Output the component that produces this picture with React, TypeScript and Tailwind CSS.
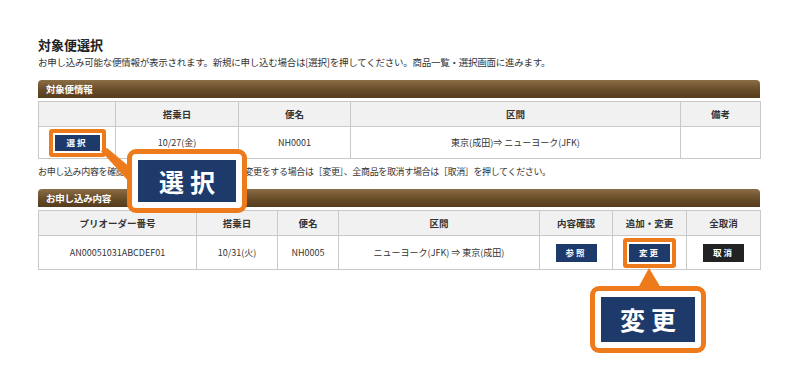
import React from "react";

const jp = { fontFamily: '"Noto Sans CJK JP", "Noto Sans", sans-serif' };

const SectionBar = ({ label }: { label: string }) => (
  <div className="h-[18px] rounded-t-[4px] bg-gradient-to-b from-[#8c6e46] via-[#6b4f2b] to-[#553c1d] pl-[8px] flex items-center">
    <span className="text-[9.5px] font-bold text-white tracking-[-0.2px]">{label}</span>
  </div>
);

const Th = ({ children, w }: { children?: React.ReactNode; w: string }) => (
  <th className={`${w} h-[25px] border border-[#c9c9c9] bg-[#f1f1f1] text-[9.5px] font-bold text-[#333] text-center align-middle`}>
    {children}
  </th>
);

const Td = ({ children, h = "h-[32px]" }: { children?: React.ReactNode; h?: string }) => (
  <td className={`${h} border border-[#c9c9c9] bg-white text-[9px] text-[#333] text-center align-middle`}>{children}</td>
);

const SmallBtn = ({ label, dark }: { label: string; dark?: boolean }) => (
  <span
    className={`inline-flex items-center justify-center w-[41px] h-[18px] text-[8.5px] font-bold text-white tracking-[2px] ${
      dark ? "bg-[#222222]" : "bg-[#1d3a6b]"
    }`}
  >
    {label}
  </span>
);

const Highlight = ({ children }: { children: React.ReactNode }) => (
  <span className="inline-flex p-[2px] border-[4px] border-[#ee7b1b] rounded-[3px] bg-white">{children}</span>
);

export default function App() {
  return (
    <div className="relative w-[800px] h-[392px] bg-white overflow-hidden" style={jp}>
      <div className="pt-[36px] pl-[38px] w-[760px]">
        <h1 className="text-[13px] font-bold text-[#222] leading-[18px]">対象便選択</h1>
        <p className="text-[9.5px] text-[#333] leading-[14px] mt-[1px] tracking-[-0.25px]">
          お申し込み可能な便情報が表示されます。新規に申し込む場合は[選択]を押してください。商品一覧・選択画面に進みます。
        </p>

        <div className="mt-[11px]">
          <SectionBar label="対象便情報" />
          <table className="mt-[3px] w-[722px] border-collapse table-fixed">
            <thead>
              <tr>
                <Th w="w-[77px]" />
                <Th w="w-[123px]">搭乗日</Th>
                <Th w="w-[112px]">便名</Th>
                <Th w="w-[330px]">区間</Th>
                <Th w="w-[80px]">備考</Th>
              </tr>
            </thead>
            <tbody>
              <tr>
                <Td>
                  <Highlight>
                    <span className="inline-flex items-center justify-center w-[45px] h-[16px] bg-[#1d3a6b] text-[8.5px] font-bold text-white tracking-[2px]">
                      選択
                    </span>
                  </Highlight>
                </Td>
                <Td>10/27(金)</Td>
                <Td>NH0001</Td>
                <Td>東京(成田)⇒ ニューヨーク(JFK)</Td>
                <Td />
              </tr>
            </tbody>
          </table>
        </div>

        <p className="mt-[6px] text-[9px] text-[#333] leading-[14px] tracking-[-0.35px]">
          お申し込み内容を確<span className="tracking-[0.5px]">認する場合は［参照］、追加・</span>
          変更をする場合は［変更］、全商品を取消す場合は［取消］を押してください。
        </p>

        <div className="mt-[10px]">
          <SectionBar label="お申し込み内容" />
          <table className="mt-[3px] w-[722px] border-collapse table-fixed">
            <thead>
              <tr>
                <Th w="w-[158px]">プリオーダー番号</Th>
                <Th w="w-[81px]">搭乗日</Th>
                <Th w="w-[61px]">便名</Th>
                <Th w="w-[201px]">区間</Th>
                <Th w="w-[73px]">内容確認</Th>
                <Th w="w-[74px]">追加・変更</Th>
                <Th w="w-[74px]">全取消</Th>
              </tr>
            </thead>
            <tbody>
              <tr>
                <Td h="h-[34px]">AN00051031ABCDEF01</Td>
                <Td h="h-[34px]">10/31(火)</Td>
                <Td h="h-[34px]">NH0005</Td>
                <Td h="h-[34px]">ニューヨーク(JFK) ⇒ 東京(成田)</Td>
                <Td h="h-[34px]">
                  <SmallBtn label="参照" />
                </Td>
                <Td h="h-[34px]">
                  <Highlight>
                    <SmallBtn label="変更" />
                  </Highlight>
                </Td>
                <Td h="h-[34px]">
                  <SmallBtn label="取消" dark />
                </Td>
              </tr>
            </tbody>
          </table>
        </div>
      </div>

      {/* callout tails */}
      <svg className="absolute left-0 top-0 pointer-events-none" width="800" height="392">
        <polygon points="101,151 107,148 131,168 131,184" fill="#ee7b1b" />
        <polygon points="649,268 638,288 661,288" fill="#ee7b1b" />
      </svg>

      {/* callout 1 */}
      <div className="absolute left-[127px] top-[149px] w-[120px] h-[64px] rounded-[9px] border-[5px] border-[#ee7b1b] bg-white p-[6px]">
        <div className="w-full h-full bg-[#1d3a6b] flex items-center justify-center">
          <span className="text-[25px] font-bold text-white tracking-[6px] pl-[6px] leading-none">選択</span>
        </div>
      </div>

      {/* callout 2 */}
      <div className="absolute left-[590px] top-[286px] w-[116px] h-[67px] rounded-[9px] border-[5px] border-[#ee7b1b] bg-white p-[6px]">
        <div className="w-full h-full bg-[#1d3a6b] flex items-center justify-center">
          <span className="text-[25px] font-bold text-white tracking-[6px] pl-[6px] leading-none">変更</span>
        </div>
      </div>
    </div>
  );
}
